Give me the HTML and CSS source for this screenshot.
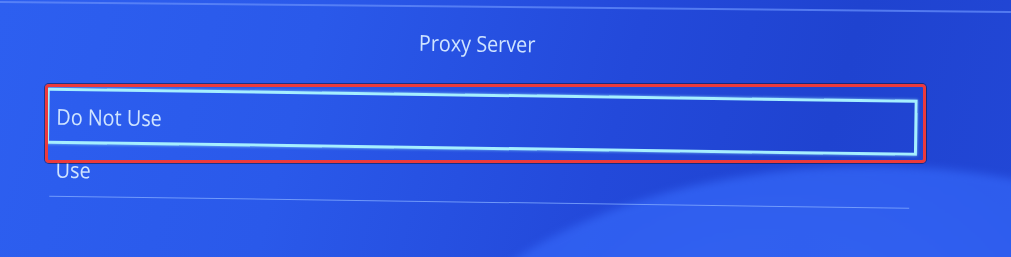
FILE: index.html
```html
<!DOCTYPE html>
<html lang="en">
<head>
<meta charset="utf-8">
<title>Proxy Server</title>
<link rel="stylesheet" href="styles.css">
</head>
<body>
<div class="screen">
  <div class="arc"></div>
  <div class="topline"></div>
  <div class="content">
    <h1 class="title"><span class="label">Proxy Server</span></h1>
    <ul class="list">
      <li class="item selected"><span class="label">Do Not Use</span></li>
      <li class="item"><span class="label">Use</span></li>
    </ul>
    <div class="divider"></div>
  </div>
  <div class="annotation"></div>
</div>
</body>
</html>
```
FILE: styles.css
```css
html, body {
  margin: 0;
  padding: 0;
}
body {
  width: 1011px;
  height: 257px;
  overflow: hidden;
  font-family: "Open Sans", "Noto Sans", sans-serif;
}
.screen {
  position: relative;
  width: 1011px;
  height: 257px;
  overflow: hidden;
  background:
    linear-gradient(105deg, #2d5ff0 0%, #2a59ea 30%, #2349da 60%, #1f43d0 80%, #2247d6 100%);
}
.arc {
  position: absolute;
  left: 400px;
  top: 166px;
  width: 940px;
  height: 540px;
  border-radius: 50%;
  background: radial-gradient(ellipse at 40% 30%, #3668f8 0%, #3060f1 45%, #2c5aec 100%);
  filter: blur(4px);
  opacity: 0.85;
}
.topline {
  position: absolute;
  left: 0;
  top: 1px;
  width: 1011px;
  height: 2px;
  background: rgba(100, 140, 250, 0.75);
  transform: rotate(0.57deg);
  transform-origin: 0 0;
}
.content {
  position: relative;
  transform: rotate(0.8deg);
  transform-origin: 0 0;
  padding-top: 24px;
}
.label {
  display: inline-block;
  transform: scaleX(0.9);
  transform-origin: 0 50%;
}
.title {
  margin: 0;
  font-size: 22px;
  line-height: 24px;
  font-weight: 500;
  color: #cfe4ff;
  text-align: center;
  padding-right: 55px;
}
.title .label {
  transform-origin: 50% 50%;
}
.list {
  list-style: none;
  margin: 39px 0 0 48px;
  padding: 0;
  width: 871px;
}
.item {
  font-size: 22px;
  font-weight: 500;
  color: #cfe4ff;
  padding-left: 10px;
  line-height: 40px;
  height: 40px;
}
.item.selected {
  height: 50px;
  line-height: 50px;
  padding-left: 7px;
  border: 3px solid #a6efff;
  box-shadow: 0 0 3px rgba(160, 240, 255, 0.7);
  margin-bottom: 5px;
}
.divider {
  margin: 7px 0 0 52px;
  width: 860px;
  height: 1px;
  background: rgba(130, 170, 255, 0.8);
}
.annotation {
  position: absolute;
  left: 45px;
  top: 84px;
  width: 875px;
  height: 73px;
  border: 3px solid #ec3a3c;
  border-radius: 4px;
  box-shadow: 0 0 0 1px rgba(10, 20, 60, 0.55);
}
```
